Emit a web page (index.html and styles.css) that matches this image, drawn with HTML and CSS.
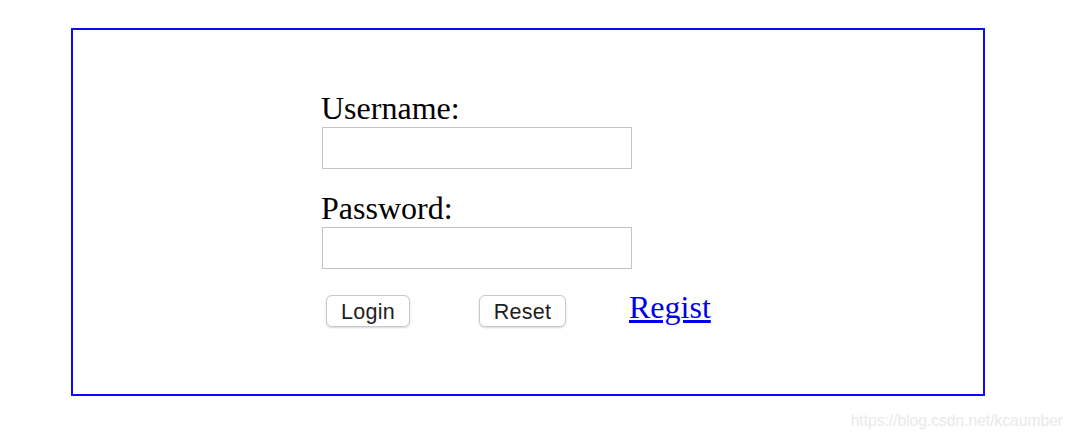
FILE: index.html
```html
<!DOCTYPE html>
<html>
<head>
<meta charset="utf-8">
<title>Login</title>
<link rel="stylesheet" href="styles.css">
</head>
<body>
<div class="page">
  <div class="box">
    <form class="form">
      <label class="label" for="u">Username:</label>
      <input class="field" id="u" type="text">
      <label class="label label-second" for="p">Password:</label>
      <input class="field" id="p" type="password">
      <div class="actions">
        <button type="button" class="btn btn-login">Login</button>
        <button type="reset" class="btn btn-reset">Reset</button>
        <a class="link" href="#">Regist</a>
      </div>
    </form>
  </div>
  <div class="watermark">https://blog.csdn.net/kcaumber</div>
</div>
</body>
</html>
```
FILE: styles.css
```css
html, body {
  margin: 0;
  padding: 0;
  background: #ffffff;
}

.page {
  padding: 28px 0 0 71px;
}

.box {
  box-sizing: border-box;
  width: 914px;
  height: 368px;
  border: 2px solid #0a0aff;
  padding: 60px 0 0 249px;
}

.form {
  display: flex;
  flex-direction: column;
  align-items: flex-start;
  margin: 0;
}

.label {
  display: block;
  margin-left: -1px;
  font-family: "Liberation Serif", "Times New Roman", serif;
  font-size: 32px;
  line-height: 37px;
  color: #000;
}

.label-second {
  margin-top: 21px;
}

.field {
  display: block;
  box-sizing: border-box;
  width: 310px;
  height: 42px;
  margin: 0;
  padding: 0 4px;
  border: 1px solid #c4c4c4;
  border-radius: 0;
  background: #fff;
  outline: none;
}

.actions {
  display: flex;
  align-items: flex-start;
  margin-top: 19px;
}

.btn {
  box-sizing: border-box;
  height: 32px;
  margin-top: 7px;
  padding: 2px 0 0;
  font-family: "Liberation Sans", Arial, sans-serif;
  font-size: 21.5px;
  letter-spacing: 0.3px;
  color: #1e1e1e;
  background: #fff;
  border: 1px solid #c9c9c9;
  border-radius: 6px;
  box-shadow: 0 1px 2px rgba(0, 0, 0, 0.16);
  text-align: center;
}

.btn-login {
  width: 84px;
  margin-left: 4px;
}

.btn-reset {
  width: 87px;
  margin-left: 69px;
}

.link {
  margin-left: 63px;
  padding-top: 1px;
  font-family: "Liberation Serif", "Times New Roman", serif;
  font-size: 32px;
  line-height: 37px;
  color: #0000ee;
  text-decoration: underline;
}

.watermark {
  margin-top: 16px;
  width: 992px;
  text-align: right;
  font-family: "Liberation Sans", Arial, sans-serif;
  font-size: 15.6px;
  line-height: 18px;
  color: #e9e9e9;
}
```
